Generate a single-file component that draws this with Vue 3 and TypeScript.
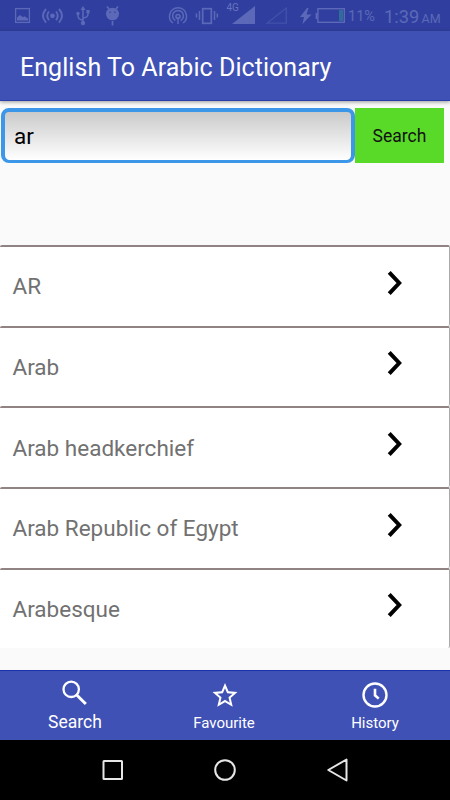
<script setup lang="ts">
import { ref } from 'vue'

const query = ref<string>('ar')
const results: string[] = ['AR', 'Arab', 'Arab headkerchief', 'Arab Republic of Egypt', 'Arabesque']
</script>

<template>
  <div class="screen">
    <div class="status">
      <svg class="status-icons" width="346" height="31" viewBox="0 0 346 31" fill="none" stroke="#5c69b8" stroke-width="1.3">
        <rect x="15.6" y="8.6" width="13.8" height="13.8" />
        <path d="M17 20.500v-3l3-2.600 3 2.400 1.400-1 3.600 2.200v2z" fill="#5c69b8" stroke="none" />
        <circle cx="52.500" cy="15.800" r="2.400" fill="#5c69b8" stroke="none" />
        <path d="M49 11.500q-3.600 4.300 0 8.600M56 11.500q3.600 4.300 0 8.600M46 9q-6 6.800 0 13.600M59 9q6 6.800 0 13.600" stroke-width="1.900" />
        <path d="M83 8v15M83 20q-5-.5-5-4v-3M83 18q5-.5 5-4v-3" stroke-width="1.500" />
        <path d="M80.500 10l2.500-4 2.500 4zM86.400 10h3.200v3.200h-3.200z" fill="#5c69b8" stroke="none" />
        <circle cx="78" cy="13.500" r="1.700" fill="#5c69b8" stroke="none" />
        <circle cx="83" cy="23" r="2.200" fill="#5c69b8" stroke="none" />
        <ellipse cx="112.500" cy="14" rx="6.500" ry="6.300" fill="#5c69b8" stroke="none" />
        <path d="M109 9l-2-2.500M116 9l2-2.500M112.500 21v4.500" stroke-width="1.700" />
        <circle cx="110" cy="12.300" r=".8" fill="#303f9f" stroke="none" />
        <circle cx="115" cy="12.300" r=".8" fill="#303f9f" stroke="none" />
        <path d="M173 23q-4.500-3-3.300-8.500a8.500 8.500 0 0 1 16.600 0q1.200 5.500-3.300 8.500M175.300 20.500a5.400 5.400 0 1 1 5.400 0" stroke-width="1.500" />
        <circle cx="178" cy="16.500" r="2" stroke-width="1.600" />
        <path d="M178 17v7" stroke-width="1.500" />
        <rect x="202.700" y="8.700" width="8.600" height="14.600" stroke-width="1.700" />
        <path d="M199.500 11v9M196.500 13.500v4M214.500 11v9M217.300 13.500v4" stroke-width="1.500" />
        <path d="M232 24l23-18v18z" fill="#5c69b8" stroke="none" />
        <path d="M267 23.200L286.300 8v15.200z" stroke="#4351aa" stroke-width="1.300" />
        <path d="M307 8l-7 9h4l-1.500 7 9-9.500h-5l2-6.500z" fill="#5c69b8" stroke="none" />
        <path d="M316.500 13v6" stroke-width="1.800" />
        <rect x="317.900" y="8.700" width="26.400" height="13.600" stroke-width="1.400" />
        <rect x="339" y="10" width="4" height="11" fill="#2f6c99" stroke="none" />
        <text class="network" x="226.500" y="11">4G</text>
      </svg>
      <span class="battery">11%</span>
      <span class="clock">1:39</span>
      <span class="meridiem">AM</span>
    </div>
    <header class="appbar"><h1>English To Arabic Dictionary</h1></header>
    <main class="content">
      <form class="search" @submit.prevent>
        <input v-model="query" class="query" type="text" aria-label="Word" />
        <button class="go" type="submit">Search</button>
      </form>
      <ul class="results">
        <li v-for="word in results" :key="word" class="row">
          <span>{{ word }}</span>
          <svg class="chevron" width="16" height="26" viewBox="0 0 16 26" fill="none" stroke="#000" stroke-width="4">
            <path d="M2.200 2.300L12.200 13 2.200 23.700" />
          </svg>
        </li>
      </ul>
    </main>
    <nav class="tabs">
      <a class="tab active">
        <svg width="30" height="30" viewBox="0 0 30 30" fill="none" stroke="#fff">
          <circle cx="11.200" cy="11.300" r="7.700" stroke-width="2.300" />
          <path d="M16.500 16.800l9.300 9.200" stroke-width="3" />
        </svg>
        <span>Search</span>
      </a>
      <a class="tab">
        <svg width="30" height="30" viewBox="0 0 30 30">
          <path fill="#fff" d="M27.500 12.100l-9-.78L15 3.040l-3.500 8.290-9 .77 6.830 5.920-2.050 8.790L15 22.150l7.720 4.660-2.040-8.790zM15 19.800l-4.700 2.840 1.250-5.350-4.150-3.600 5.470-.47L15 8.170l2.140 5.060 5.470.47-4.150 3.600 1.250 5.350z" />
        </svg>
        <span class="favourite">Favourite</span>
      </a>
      <a class="tab">
        <svg width="30" height="30" viewBox="0 0 30 30" fill="none" stroke="#fff">
          <circle cx="15" cy="15" r="11.500" stroke-width="2.400" />
          <path d="M15 8.700v6.600l3.700 3.300" stroke-width="2.600" />
        </svg>
        <span>History</span>
      </a>
    </nav>
    <div class="system">
      <svg width="24" height="24" viewBox="0 0 24 24"><rect x="2.500" y="3" width="18.500" height="18" rx=".5" /></svg>
      <svg width="24" height="24" viewBox="0 0 24 24"><circle cx="12" cy="12" r="9.800" /></svg>
      <svg width="24" height="24" viewBox="0 0 24 24"><path d="M20.500 1.500v21L2.300 12z" /></svg>
    </div>
  </div>
</template>

<style>
body {
  margin: 0;
}
</style>

<style scoped>
.screen {
  width: 450px;
  height: 800px;
  display: flex;
  flex-direction: column;
  overflow: hidden;
  background: #fafafa;
  font-family: Roboto, sans-serif;
}
.status {
  height: 31px;
  flex: none;
  display: flex;
  background: #303f9f;
  color: #5c69b8;
  line-height: 33px;
  white-space: nowrap;
}
.status-icons {
  flex: none;
}
.network {
  fill: #6874bd;
  stroke: none;
  font-size: 10px;
}
.battery {
  margin-left: 2px;
  width: 36px;
  font-size: 14.5px;
}
.clock {
  width: 37.5px;
  font-size: 18.3px;
}
.meridiem {
  font-size: 12.5px;
  line-height: 37px;
}
.appbar {
  height: 70px;
  flex: none;
  box-sizing: border-box;
  display: flex;
  align-items: center;
  padding: 4px 20px 0;
  background: #3f51b5;
  border-bottom: 1px solid #2b3eae;
  box-shadow: 0 1px 4px rgba(0, 0, 0, 0.4);
}
h1 {
  margin: 0;
  color: #fff;
  font-size: 25px;
  font-weight: 400;
  letter-spacing: 0.05px;
  white-space: nowrap;
}
.content {
  flex: 1;
  min-height: 0;
}
.search {
  display: flex;
  padding: 7px 6px 0 1px;
}
.query {
  flex: 1;
  min-width: 0;
  height: 55px;
  box-sizing: border-box;
  padding: 0 9px;
  border: 4px solid #3d97e8;
  border-bottom-width: 3px;
  border-radius: 8px;
  background: linear-gradient(#cacaca, #fff);
  color: #000;
  font: 22.5px Roboto, sans-serif;
  outline: none;
}
.go {
  width: 89px;
  height: 55px;
  padding: 0;
  border: 0;
  background: #59d928;
  color: #111;
  font: 17.5px Roboto, sans-serif;
}
.results {
  margin: 82px 0 0;
  padding: 0;
  list-style: none;
}
.row {
  height: 80.67px;
  box-sizing: border-box;
  display: flex;
  align-items: center;
  justify-content: space-between;
  padding: 0 46.5px 0 12.5px;
  border-top: 2px solid #918384;
  border-right: 1px solid #aaa;
  border-radius: 2px;
  background: #fff;
  color: #717171;
  font-size: 22.5px;
}
.chevron {
  margin-bottom: 7px;
}
.tabs {
  height: 70px;
  flex: none;
  box-sizing: border-box;
  display: grid;
  grid-template-columns: repeat(3, 1fr);
  border-top: 1px solid #1732aa;
  background: #3f51b5;
}
.tab {
  display: flex;
  flex-direction: column;
  align-items: center;
  padding-top: 9px;
  color: #fff;
  font-size: 15px;
  line-height: 26px;
}
.tab.active {
  padding-top: 7px;
  font-size: 17.5px;
  line-height: 28px;
}
.favourite {
  margin-right: 2px;
}
.system {
  height: 60px;
  flex: none;
  display: flex;
  justify-content: center;
  align-items: center;
  gap: 88.5px;
  background: #000;
}
.system svg {
  fill: none;
  stroke: #e6e6e6;
  stroke-width: 2;
  stroke-linejoin: round;
}
</style>
